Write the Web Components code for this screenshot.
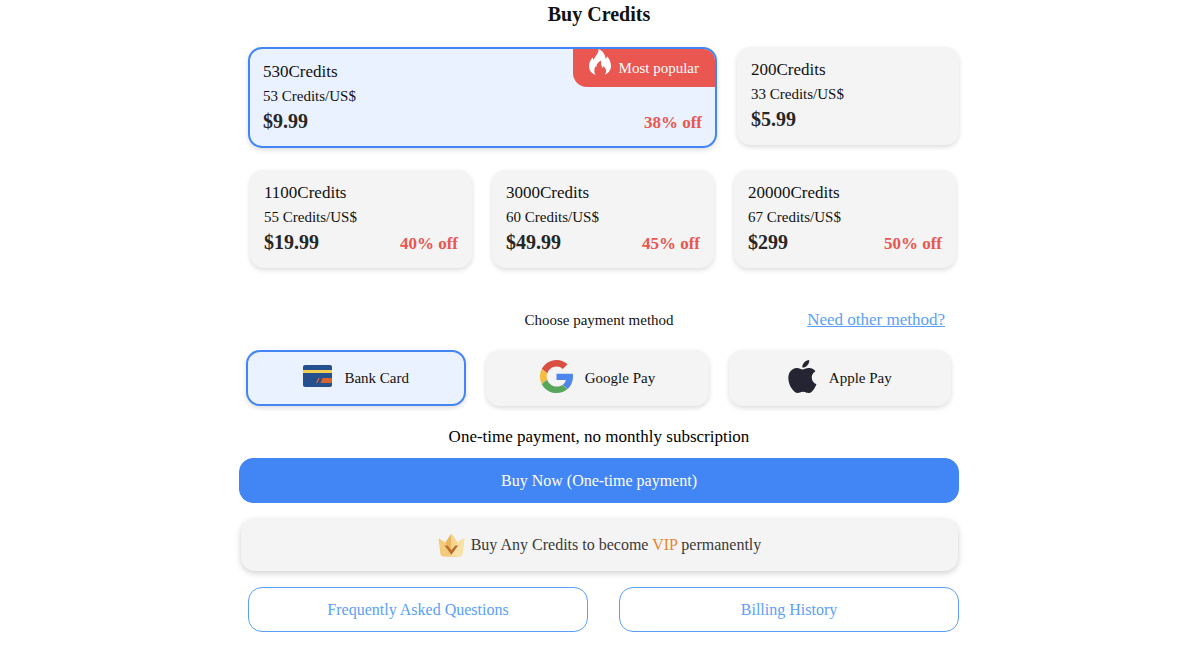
<!DOCTYPE html>
<html lang="en">
<head>
<meta charset="utf-8">
<meta name="viewport" content="width=device-width, initial-scale=1">
<title>Buy Credits</title>
<style>
  body {
    margin: 0;
    padding-right: 2px;
    background: #fff;
    color: #111;
    font-family: "Liberation Serif", "Times New Roman", serif;
    --accent: #4285f4;
    --accent-soft: #ebf2ff;
    --link: #5a9ff8;
    --panel: #f4f4f4;
    --danger: #ea5650;
    --shadow: 0 2px 5px rgba(0, 0, 0, .14);
    --radius: 14px;
  }
</style>
</head>
<body>
<buy-credits></buy-credits>

<script>
const define = (name, html) => {
  const template = document.createElement('template');
  template.innerHTML = html;
  customElements.define(name, class extends HTMLElement {
    constructor() {
      super();
      this.attachShadow({ mode: 'open' }).append(template.content.cloneNode(true));
    }
    connectedCallback() {
      const button = this.shadowRoot.querySelector('button[aria-pressed]');
      if (button) button.setAttribute('aria-pressed', String(this.hasAttribute('selected')));
    }
  });
};

define('popular-badge', `
  <style>
    :host { display: flex; align-items: center; gap: 8px; height: 38px; padding: 0 16px;
      box-sizing: border-box; background: var(--danger); color: #fff; font-size: 15px;
      border-radius: 0 12px 0 14px; }
    svg { align-self: flex-start; flex: none; display: block; }
  </style>
  <svg width="22" height="26" viewBox="0 0 22 26" aria-hidden="true">
    <path fill="#fff" d="M9.500 0C13.500 1.800 16.200 5 16.600 9.800 17.400 9.200 17.900 8.300 18 7.200 20.800 10.300 22 13.500 22 17 22 21 19.800 24.200 15.800 25.800 17 24 17.400 22.300 16.900 20.600 16.500 19.400 15.300 18.600 14.800 17 14.200 17.600 13.900 18.300 13.900 19.200 12.300 17.200 11.800 14.600 12.100 11.600 8.800 13 7.400 15.600 7.300 18.400 6.900 18.100 6.700 17.700 6.600 17 5 20 4.800 23 6.500 25.800 2.400 24.400 0 21.200 0 17.200 0 14 1.400 11.300 3.600 8.600 3.800 9.600 4.200 10.400 5 11 5.400 7 10 5 9.500 0z"/>
  </svg>
  <slot></slot>
`);

define('credit-plan', `
  <style>
    :host { display: block; min-width: 0; }
    button { position: relative; display: block; width: 100%; box-sizing: border-box; margin: 0;
      padding: 11px 14px 13px; border: 0; border-radius: var(--radius); background: var(--panel);
      box-shadow: var(--shadow); color: #111; font: inherit; text-align: left; cursor: pointer; }
    :host([selected]) button { padding: 11px 13px 12px; border: 2px solid var(--accent);
      background: var(--accent-soft); }
    .credits, .rate { display: block; font-size: 17px; line-height: 24px; }
    .rate { font-size: 15px; }
    .total { display: flex; justify-content: space-between; align-items: baseline;
      font-size: 20px; line-height: 26px; font-weight: bold; color: #262626; }
    .off { font-size: 17px; line-height: 20px; color: var(--danger); }
    .corner { position: absolute; top: 0; right: 0; }
  </style>
  <button type="button" aria-pressed="false">
    <span class="credits"><slot></slot></span>
    <span class="rate"><slot name="rate"></slot></span>
    <span class="total"><slot name="price"></slot><span class="off"><slot name="off"></slot></span></span>
    <span class="corner"><slot name="badge"></slot></span>
  </button>
`);

define('pay-method', `
  <style>
    :host { display: block; min-width: 0; }
    button { display: flex; align-items: center; justify-content: center; gap: 12px; width: 100%;
      height: 56px; box-sizing: border-box; margin: 0; padding: 0 12px; border: 0;
      border-radius: var(--radius); background: var(--panel); box-shadow: var(--shadow);
      color: #111; font: inherit; font-size: 15px; cursor: pointer; }
    :host([selected]) button { border: 2px solid var(--accent); background: var(--accent-soft); }
    ::slotted(svg) { display: block; flex: none; margin-bottom: 4px; }
  </style>
  <button type="button" aria-pressed="false"><slot name="icon"></slot><span><slot></slot></span></button>
`);

define('action-button', `
  <style>
    :host { display: block; min-width: 0; }
    button { display: block; width: 100%; height: 45px; box-sizing: border-box; margin: 0;
      padding: 0 12px; border: 1px solid var(--link); border-radius: var(--radius);
      background: #fff; color: var(--link); font: inherit; font-size: 16px; cursor: pointer; }
    :host([primary]) button { border-color: var(--accent); background: var(--accent); color: #fff; }
  </style>
  <button type="button"><slot></slot></button>
`);

define('vip-note', `
  <style>
    :host { display: block; }
    p { display: flex; align-items: center; justify-content: center; gap: 6px; height: 52px;
      margin: 0; border-radius: var(--radius); background: var(--panel);
      box-shadow: 0 2px 6px rgba(0, 0, 0, .2); color: #3a3a3a; font-size: 16px; }
    svg { display: block; flex: none; }
  </style>
  <p>
    <svg width="27" height="23" viewBox="0 0 27 23" aria-hidden="true">
      <path fill="#f4cb7c" d="M.6 5.200Q.4 4 1.600 4.700L7.500 8.600 12.300.8Q13.300-.3 14.300.8L19.200 8.600 25.400 4.700Q26.500 4 26.300 5.200L24.300 20Q24 22.200 21.500 22.400Q13.300 23.200 5 22.400Q2.700 22.200 2.400 20z"/>
      <path fill="#fae1a6" d="M13.300 0Q14 .2 14.300.8L19.200 8.600 25.400 4.700Q26.500 4 26.300 5.200L24.300 20Q24 22.200 21.500 22.400L13.300 22z"/>
      <path fill="#e8b860" d="M7.500 8.600L13.300 0V20z"/>
      <path fill="#f6d58e" d="M19.200 8.600L13.300 0V20z"/>
      <path fill="#b96e2c" d="M6.500 11.500H9.600L13.300 16.200 17.300 11.500H20.200L13.400 20.800z"/>
    </svg>
    <span><slot></slot></span>
  </p>
`);

define('buy-credits', `
  <style>
    :host { display: block; max-width: 720px; margin: 0 auto; }
    h1 { margin: 0; font-size: 20px; line-height: 28px; text-align: center; }
    .plans { display: grid; align-items: start; }
    .featured { grid-template-columns: 469fr 222fr; gap: 20px; padding-left: 9px; margin-top: 19px; }
    .more { grid-template-columns: repeat(3, 1fr); gap: 20px; padding: 0 3px 0 11px; margin-top: 22px; }
    .methods-head { display: grid; grid-template-columns: 1fr auto 1fr; align-items: center;
      margin-top: 40px; padding-right: 14px; padding-left: 14px; line-height: 24px; }
    h2 { grid-column: 2; margin: 0; font-size: 15px; font-weight: normal; }
    a { justify-self: end; color: var(--link); font-size: 17px; }
    .methods { display: grid; grid-template-columns: 220fr 222fr 222fr; gap: 20px;
      margin-top: 18px; padding: 0 8px 0 7px; }
    .terms { margin: 18px 0 8px; font-size: 17px; line-height: 26px; text-align: center; color: #000; }
    vip-note { margin: 16px 1px 0 2px; }
    vip-note b { color: #e8862d; font-weight: normal; }
    .links { display: grid; grid-template-columns: 1fr 1fr; gap: 31px; margin: 16px 0 14px; padding-left: 9px; }
  </style>
  <main>
    <h1>Buy Credits</h1>
    <section class="plans featured">
      <credit-plan selected>530Credits<span slot="rate">53 Credits/US$</span><span slot="price">$9.99</span><span slot="off">38% off</span><popular-badge slot="badge">Most popular</popular-badge></credit-plan>
      <credit-plan>200Credits<span slot="rate">33 Credits/US$</span><span slot="price">$5.99</span></credit-plan>
    </section>
    <section class="plans more">
      <credit-plan>1100Credits<span slot="rate">55 Credits/US$</span><span slot="price">$19.99</span><span slot="off">40% off</span></credit-plan>
      <credit-plan>3000Credits<span slot="rate">60 Credits/US$</span><span slot="price">$49.99</span><span slot="off">45% off</span></credit-plan>
      <credit-plan>20000Credits<span slot="rate">67 Credits/US$</span><span slot="price">$299</span><span slot="off">50% off</span></credit-plan>
    </section>
    <div class="methods-head">
      <h2>Choose payment method</h2>
      <a href="#other">Need other method?</a>
    </div>
    <div class="methods">
      <pay-method selected>
        <svg slot="icon" width="29" height="22" viewBox="0 0 29 22" aria-hidden="true">
          <rect width="29" height="22" rx="2" fill="#26508d"/>
          <path fill="#f5cf52" d="M0 5h29v3H0z"/>
          <path fill="#da632c" d="M19.500 13H29v5H17.500zM15.300 13h1.500l-2.300 5H13z"/>
        </svg>Bank Card</pay-method>
      <pay-method>
        <svg slot="icon" width="33" height="33" viewBox="0 0 48 48" aria-hidden="true">
          <path fill="#db4f43" d="M24 9.500c3.540 0 6.710 1.220 9.210 3.600l6.850-6.850C35.900 2.380 30.470 0 24 0 14.620 0 6.510 5.380 2.560 13.220l7.980 6.190C12.430 13.720 17.740 9.500 24 9.500z"/>
          <path fill="#4f86ec" d="M48 20H24v9h13.500c-.6 3-2.300 5.500-4.800 7.200l7.700 6C45.400 37.500 48 30.500 48 24.500c0-1.600 0-3-.2-4.500z"/>
          <path fill="#f3bc42" d="M10.530 28.590c-.48-1.450-.76-2.990-.76-4.590s.27-3.140.76-4.590l-7.980-6.190C.92 16.460 0 20.120 0 24c0 3.880.92 7.540 2.560 10.780l7.970-6.190z"/>
          <path fill="#58a55c" d="M24 48c6.480 0 11.930-2.130 15.890-5.810l-7.730-6c-2.150 1.450-4.920 2.300-8.160 2.300-6.260 0-11.570-4.220-13.470-9.910l-7.980 6.190C6.510 42.620 14.620 48 24 48z"/>
        </svg>Google Pay</pay-method>
      <pay-method>
        <svg slot="icon" width="29" height="33" viewBox="2 0 20.200 24" preserveAspectRatio="none" aria-hidden="true">
          <path fill="#252433" d="M12.152 6.896c-.948 0-2.415-1.078-3.960-1.040-2.040.027-3.910 1.183-4.961 3.014-2.117 3.675-.546 9.103 1.519 12.090 1.013 1.454 2.208 3.090 3.792 3.039 1.520-.065 2.090-.987 3.935-.987 1.831 0 2.350.987 3.960.948 1.637-.026 2.676-1.480 3.676-2.948 1.156-1.688 1.636-3.325 1.662-3.415-.039-.013-3.182-1.221-3.220-4.857-.026-3.040 2.480-4.494 2.597-4.559-1.429-2.090-3.623-2.324-4.390-2.376-2-.156-3.675 1.090-4.610 1.090zM15.530 3.830c.843-1.012 1.400-2.427 1.245-3.830-1.207.052-2.662.805-3.532 1.818-.78.896-1.454 2.338-1.273 3.714 1.338.104 2.715-.688 3.559-1.701"/>
        </svg>Apple Pay</pay-method>
    </div>
    <p class="terms">One-time payment, no monthly subscription</p>
    <action-button primary>Buy Now (One-time payment)</action-button>
    <vip-note>Buy Any Credits to become <b>VIP</b> permanently</vip-note>
    <div class="links">
      <action-button>Frequently Asked Questions</action-button>
      <action-button>Billing History</action-button>
    </div>
  </main>
`);
</script>
</body>
</html>
